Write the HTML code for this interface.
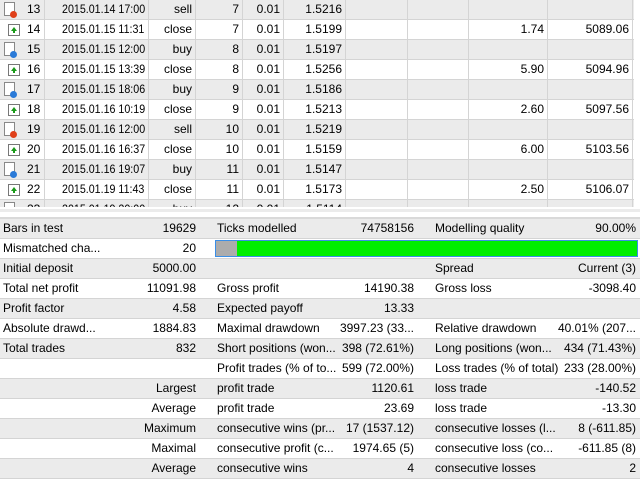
<!DOCTYPE html>
<html><head><meta charset="utf-8"><style>
*{margin:0;padding:0;box-sizing:border-box}
body{width:640px;height:480px;overflow:hidden;background:#fff;font-family:"Liberation Sans",sans-serif;font-size:12px;color:#000;position:relative}
.top{position:absolute;left:0;top:0;width:640px;height:207px;overflow:hidden}
.r{position:absolute;left:0;width:634px;height:20px;border-bottom:1px solid #d4d4d4}
.g{background:#ebebeb}.w{background:#fff}
.c{position:absolute;top:0;height:19px;line-height:19px;white-space:nowrap;border-right:1px solid #d4d4d4;overflow:hidden}
.rt{text-align:right;padding-right:3px}
.b{position:absolute;left:0;width:640px;height:20px;border-bottom:1px solid #d4d4d4}
.t{position:absolute;top:0;line-height:19px;white-space:nowrap}
.doc{position:absolute;left:4px;top:2px;width:11px;height:14px;border:1px solid #888;background:#fff}
.dot{position:absolute;left:10px;top:11px;width:7px;height:7px;border-radius:50%}
.gb{position:absolute;left:8px;top:4px;width:12px;height:12px;border:1px solid #777;background:#fff}
.gb i{position:absolute;left:2px;top:2px;width:0;height:0;border-left:3px solid transparent;border-right:3px solid transparent;border-bottom:4px solid #1a9a1a}
.gb b{position:absolute;left:4px;top:5px;width:2px;height:3px;background:#1a9a1a}
.d{position:absolute;left:17px;top:0;transform:scaleX(0.89);transform-origin:0 0}
</style></head><body>
<div class="top" id="top"></div>
<div style="position:absolute;left:0;top:207px;width:640px;height:12px;background:#fff"></div>
<div style="position:absolute;left:0;top:209px;width:640px;height:3px;background:#ebebeb"></div>
<div style="position:absolute;left:0;top:217px;width:640px;height:2px;background:#d9d9d9"></div>
<div id="bot"></div>
<script>
var rows=[[13,"2015.01.14 17:00","sell",7,"1.5216","",""],[14,"2015.01.15 11:31","close",7,"1.5199","1.74","5089.06"],[15,"2015.01.15 12:00","buy",8,"1.5197","",""],[16,"2015.01.15 13:39","close",8,"1.5256","5.90","5094.96"],[17,"2015.01.15 18:06","buy",9,"1.5186","",""],[18,"2015.01.16 10:19","close",9,"1.5213","2.60","5097.56"],[19,"2015.01.16 12:00","sell",10,"1.5219","",""],[20,"2015.01.16 16:37","close",10,"1.5159","6.00","5103.56"],[21,"2015.01.16 19:07","buy",11,"1.5147","",""],[22,"2015.01.19 11:43","close",11,"1.5173","2.50","5106.07"],[23,"2015.01.19 20:00","buy",12,"1.5114","",""]];
var h="";
rows.forEach(function(r,i){
 var ic=r[2]=="close"?'<div class="gb"><i></i><b></b></div>':'<div class="doc"></div><div class="dot" style="background:'+(r[2]=="sell"?"#e0401a":"#2a7ad8")+'"></div>';
 var cols=[[0,45,ic+'<span style="position:absolute;left:27px">'+r[0]+'</span>',""],[45,104,'<span class="d">'+r[1]+'</span>',""],[149,47,r[2],"rt"],[196,47,r[3],"rt"],[243,41,"0.01","rt"],[284,62,r[4],"rt"],[346,62,"",""],[408,61,"",""],[469,79,r[5],"rt"],[548,85,r[6],"rt"]];
 h+='<div class="r '+(i%2?"w":"g")+'" style="top:'+(i*20)+'px">';
 cols.forEach(function(c){h+='<div class="c '+c[3]+'" style="left:'+c[0]+'px;width:'+c[1]+'px">'+c[2]+'</div>'});
 h+='</div>';
});
document.getElementById("top").innerHTML=h;
var b=[["Bars in test","19629","Ticks modelled","74758156","Modelling quality","90.00%"],["Mismatched cha...","20","BAR","","",""],["Initial deposit","5000.00","","","Spread","Current (3)"],["Total net profit","11091.98","Gross profit","14190.38","Gross loss","-3098.40"],["Profit factor","4.58","Expected payoff","13.33","",""],["Absolute drawd...","1884.83","Maximal drawdown","3997.23 (33...","Relative drawdown","40.01% (207..."],["Total trades","832","Short positions (won...","398 (72.61%)","Long positions (won...","434 (71.43%)"],["","","Profit trades (% of to...","599 (72.00%)","Loss trades (% of total)","233 (28.00%)"],["","Largest","profit trade","1120.61","loss trade","-140.52"],["","Average","profit trade","23.69","loss trade","-13.30"],["","Maximum","consecutive wins (pr...","17 (1537.12)","consecutive losses (l...","8 (-611.85)"],["","Maximal","consecutive profit (c...","1974.65 (5)","consecutive loss (co...","-611.85 (8)"],["","Average","consecutive wins","4","consecutive losses","2"]];
h="";
b.forEach(function(r,i){
 h+='<div class="b '+(i%2?"w":"g")+'" style="top:'+(219+i*20)+'px">';
 h+='<span class="t" style="left:3px">'+r[0]+'</span><span class="t" style="right:444px">'+r[1]+'</span>';
 if(r[2]=="BAR"){h+='<div style="position:absolute;left:215px;top:1px;width:423px;height:17px;border:1px solid #3a8ee6;background:#00ee00"><div style="width:21px;height:15px;background:#acacac"></div></div>';}
 else{h+='<span class="t" style="left:217px">'+r[2]+'</span><span class="t" style="right:226px">'+r[3]+'</span><span class="t" style="left:435px">'+r[4]+'</span><span class="t" style="right:4px">'+r[5]+'</span>';}
 h+='</div>';
});
document.getElementById("bot").innerHTML=h;
</script>
</body></html>
